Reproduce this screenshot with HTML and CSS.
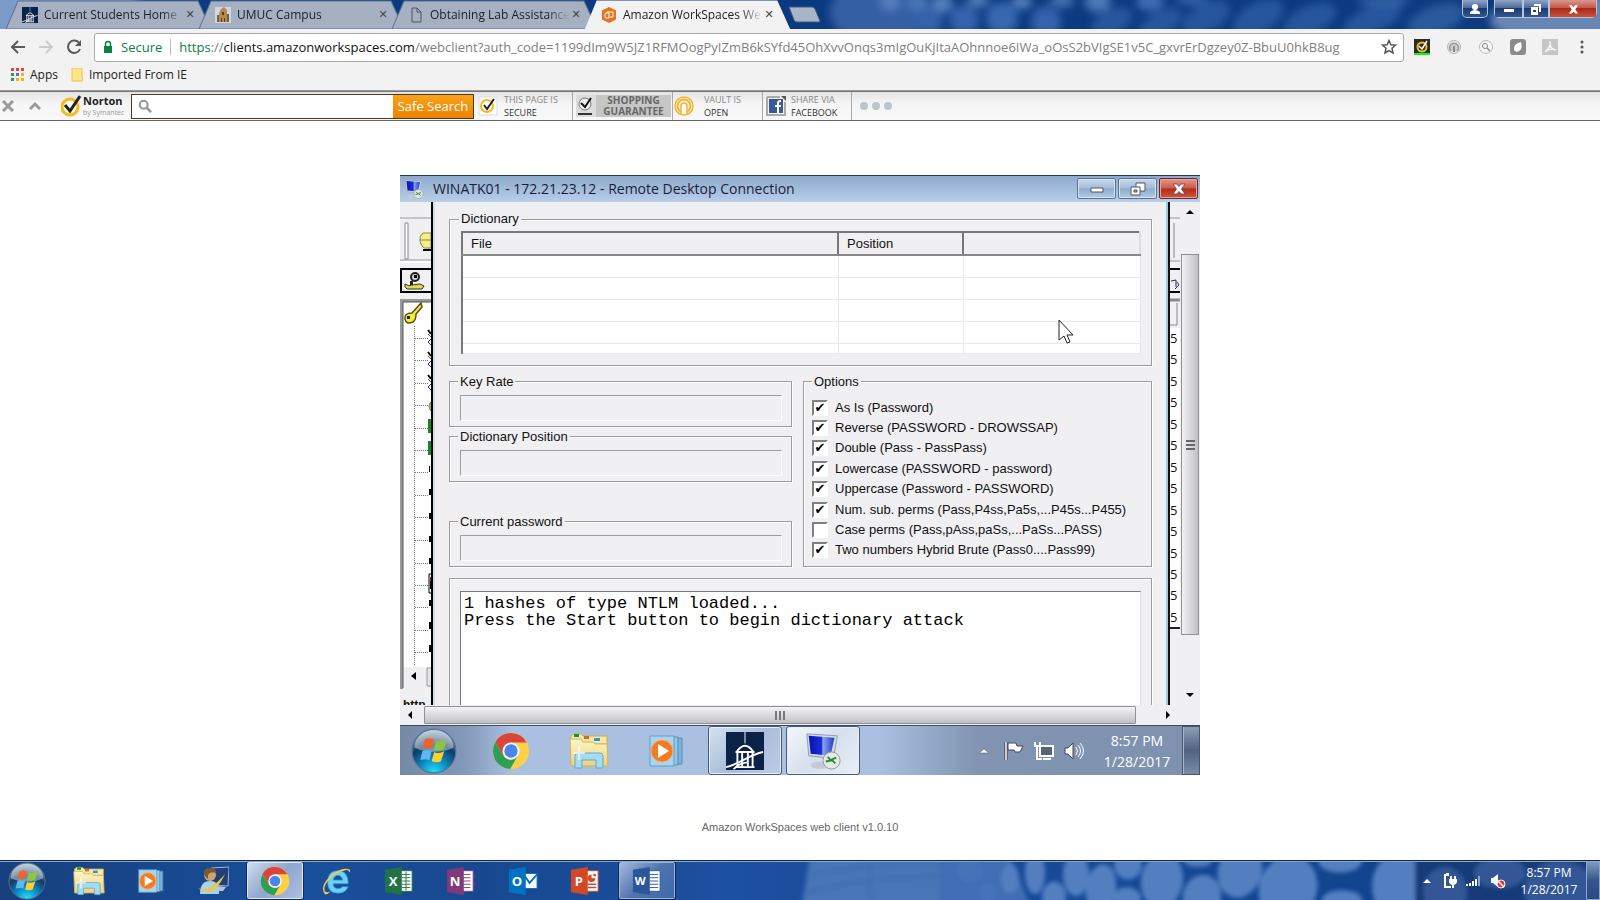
FILE: index.html
```html
<!DOCTYPE html>
<html lang="en">
<head>
<meta charset="utf-8">
<title>Amazon WorkSpaces Web Client</title>
<link rel="stylesheet" href="styles.css">
</head>
<body>
<svg class="defs" aria-hidden="true">
  <defs>
    <radialGradient id="orbG" cx=".5" cy="1" r="1"><stop offset="0" stop-color="#25e4ff"/><stop offset=".35" stop-color="#0a86bd"/><stop offset=".65" stop-color="#12395f"/><stop offset="1" stop-color="#a9c0d4"/></radialGradient>
    <linearGradient id="foldG" x2="0" y2="1"><stop offset="0" stop-color="#fdf6c8"/><stop offset="1" stop-color="#ecd27a"/></linearGradient>
    <linearGradient id="scrG" x2="1" y2="0"><stop offset="0" stop-color="#0a12b0"/><stop offset=".5" stop-color="#1830d8"/><stop offset=".55" stop-color="#8fa4f0"/><stop offset="1" stop-color="#2038c0"/></linearGradient>
    <filter id="soft"><feGaussianBlur stdDeviation="2"/></filter>
    <filter id="softer"><feGaussianBlur stdDeviation="4"/></filter>
  </defs>
  <symbol id="orb" viewBox="0 0 40 40">
    <circle cx="20" cy="20" r="19" fill="url(#orbG)" stroke="#54718f"/>
    <path d="M3 17a17 15 0 0 1 34 0c-10 5-24 5-34 0z" fill="#fff" opacity=".4"/>
    <path d="M12 10c3-2 6-1 8 0l-2 8c-3-1-5-1-8 0z" fill="#f0612c"/>
    <path d="M22 11c3 1 6 1 9-1l-2 8c-3 2-6 2-9 1z" fill="#8cc63e"/>
    <path d="M10 20c3-1 5-1 8 0l-2 8c-2-1-5-1-8 0z" fill="#5fb7ee"/>
    <path d="M20 21c3 1 6 1 9-1l-3 9c-2 1-5 1-8 0z" fill="#fcd02e"/>
  </symbol>
  <symbol id="folder" viewBox="0 0 40 36">
    <path d="M2 3l2-2h8l2 2h24v8H2z" fill="#f7e9a5" stroke="#c9a95a"/>
    <path d="M5 1h5v3H5z" fill="#0a9a3c"/><path d="M15 3h5v3h-5z" fill="#e0642a"/><path d="M25 5h6v3h-6z" fill="#3a8edc"/>
    <path d="M1 6h11l2 3h10l2 2h12l1 22H2z" fill="url(#foldG)" stroke="#d2b25c"/>
    <path d="M6 35V23q0-3 3-3h22q3 0 3 3v12h-7v-8H13v8z" fill="#a6dcf0" stroke="#5fa9cf"/>
    <path d="M10 13v14M4 20h12" stroke="#fff" stroke-width="2" opacity=".7"/>
  </symbol>
  <symbol id="wmp" viewBox="0 0 36 32">
    <path d="M20 3h13v26H20z" fill="#7fb4d8" stroke="#4f8fb9"/><path d="M16 2h13v28H16z" fill="#95c6e4" stroke="#4f8fb9"/>
    <path d="M1 1h24v30H1z" fill="#a9d5ee" stroke="#5c9fca"/><circle cx="13" cy="16" r="11" fill="#f47b20" stroke="#fbb070"/><path d="M9 9l11 7-11 7z" fill="#fff"/>
  </symbol>
  <symbol id="chrome" viewBox="0 0 40 40">
    <circle cx="20" cy="20" r="19" fill="#fdd04a"/>
    <path d="M20 11h16.500A19 19 0 0 0 3.500 10.500L12 25z" fill="#d8453a"/>
    <path d="M3.500 10.500A19 19 0 0 0 19 39l8.500-14.500A9 9 0 0 1 12 25z" fill="#2f9e56"/>
    <circle cx="20" cy="20" r="9" fill="#f4f6f8"/><circle cx="20" cy="20" r="7" fill="#4a86ea"/>
  </symbol>
  <symbol id="gazebo" viewBox="0 0 40 40">
    <path d="M0 0h40v40H0z" fill="#0b2248"/><path d="M20 0v12" stroke="#fff"/><path d="M11 21q9-13 18 0M10 21h20M12 21v16M28 21v16M17 22v15M23 22v15M10 37h20" fill="none" stroke="#fff" stroke-width="2"/>
    <path d="M0 37C14 34 24 24 39 21M8 39q6-6 14-7" fill="none" stroke="#fff" stroke-width="2"/>
  </symbol>
  <symbol id="remote" viewBox="0 0 40 40">
    <path d="M3 2l32 2-4 24-26-3z" fill="#d4dbe6" stroke="#8e9ab0"/><path d="M5 4l27 2-4 19-21-2z" fill="url(#scrG)"/>
    <ellipse cx="17" cy="35" rx="10" ry="4" fill="#c3cad6"/><circle cx="29" cy="30" r="9" fill="#e3e8e6" stroke="#8f9a96"/>
    <path d="M23 31l5-1-3-4M34 27l-5 2 4 4" fill="none" stroke="#2c8a34" stroke-width="2"/>
  </symbol>
</svg>

<header class="tabstrip">
  <svg class="wall" viewBox="0 0 1600 29" preserveAspectRatio="none" aria-hidden="true">
    <g filter="url(#softer)">
      <ellipse cx="20" cy="8" rx="120" ry="40" fill="#7c9bcb"/>
      <ellipse cx="880" cy="12" rx="50" ry="34" fill="#355fa5"/>
      <ellipse cx="890" cy="2" rx="10" ry="8" fill="#5580bf"/><ellipse cx="918" cy="3" rx="11" ry="8" fill="#4a76b9"/><ellipse cx="942" cy="4" rx="11" ry="9" fill="#5580c0"/>
      <ellipse cx="930" cy="22" rx="13" ry="12" fill="#3462aa"/><ellipse cx="964" cy="20" rx="15" ry="15" fill="#3462aa"/><ellipse cx="978" cy="1" rx="11" ry="6" fill="#5580c0"/>
      <ellipse cx="1002" cy="18" rx="16" ry="16" fill="#3968b0"/><ellipse cx="1022" cy="2" rx="10" ry="7" fill="#5480c0"/><ellipse cx="1046" cy="22" rx="15" ry="16" fill="#3462aa"/>
      <ellipse cx="1062" cy="1" rx="12" ry="6" fill="#4a76b8"/><ellipse cx="1098" cy="2" rx="13" ry="10" fill="#4d79bb"/><ellipse cx="1112" cy="22" rx="22" ry="12" fill="#28569d" transform="rotate(-25 1112 22)"/>
      <ellipse cx="1150" cy="2" rx="14" ry="9" fill="#3e6db2"/><ellipse cx="1160" cy="24" rx="24" ry="12" fill="#28569d" transform="rotate(-30 1160 24)"/>
      <ellipse cx="1206" cy="18" rx="26" ry="14" fill="#28569d" transform="rotate(-30 1206 18)"/><ellipse cx="1192" cy="0" rx="16" ry="4" fill="#3e6db2"/>
      <ellipse cx="1258" cy="18" rx="28" ry="15" fill="#28569d" transform="rotate(-30 1258 18)"/><ellipse cx="1310" cy="20" rx="28" ry="14" fill="#28569d" transform="rotate(-25 1310 20)"/>
      <ellipse cx="1372" cy="20" rx="32" ry="13" fill="#28569d" transform="rotate(-25 1372 20)"/><ellipse cx="1384" cy="1" rx="26" ry="5" fill="#3562a6"/>
      <ellipse cx="1436" cy="20" rx="30" ry="14" fill="#2b5a9c" transform="rotate(-20 1436 20)"/><ellipse cx="1580" cy="20" rx="90" ry="26" fill="#6886b4"/>
    </g>
  </svg>
  <nav class="tabs" aria-label="Tabs">
    <div class="tab">
      <svg class="tab-bg" viewBox="0 0 205 28" preserveAspectRatio="none"><path d="M0 28L12 1h180l13 27z"/></svg>
      <svg class="fav"><use href="#gazebo"/></svg><a href="#" class="tab-title">Current Students Home |</a><button class="x" aria-label="Close tab"></button>
    </div>
    <div class="tab">
      <svg class="tab-bg" viewBox="0 0 205 28" preserveAspectRatio="none"><path d="M0 28L12 1h180l13 27z"/></svg>
      <svg class="fav" viewBox="0 0 16 16"><path d="M0 0h16v16H0z" fill="#cfd8e2"/><path d="M4 15V6l2-4 3-2 3 3v12z" fill="#b58a4c"/><path d="M2 15V8h2v7zM12 15V7h2v8z" fill="#7a6238"/><path d="M6 15v-4h1v4zM9 15v-4h1v4zM7 5h2v3H7z" fill="#5a3a1e"/></svg>
      <a href="#" class="tab-title">UMUC Campus</a><button class="x" aria-label="Close tab"></button>
    </div>
    <div class="tab">
      <svg class="tab-bg" viewBox="0 0 205 28" preserveAspectRatio="none"><path d="M0 28L12 1h180l13 27z"/></svg>
      <svg class="fav" viewBox="0 0 16 16"><path d="M4 1h5l4 4v10H4zM9 1v4h4" fill="none" stroke="#4d5662"/></svg>
      <a href="#" class="tab-title">Obtaining Lab Assistance</a><button class="x" aria-label="Close tab"></button>
    </div>
    <div class="tab active">
      <svg class="tab-bg" viewBox="0 0 205 28" preserveAspectRatio="none"><path d="M0 29L12 1h180l13 28z"/></svg>
      <svg class="fav" viewBox="0 0 16 16"><path d="M8 0l7 3.500v9L8 16l-7-3.500v-9z" fill="#e8711c"/><path d="M4 7q0-1 1-1h3v5H5q-1 0-1-1zM6 6V5h6v5H9" fill="none" stroke="#fff"/></svg>
      <a href="#" class="tab-title">Amazon WorkSpaces We</a><button class="x" aria-label="Close tab"></button>
    </div>
    <button class="newtab" aria-label="New tab"><svg viewBox="0 0 34 18"><path d="M1 1h23q2 0 3 2l5 12q0 1-1 1H9q-2 0-3-2z" fill="#a9b4c5" stroke="#3d5d90"/></svg></button>
  </nav>
  <div class="wincontrols">
    <button class="glass profile" aria-label="Profile"><svg viewBox="0 0 12 12"><circle cx="6" cy="4" r="3"/><path d="M1 11V9q5-4 10 0v2z"/></svg></button>
    <div class="trio">
      <button class="glass" aria-label="Minimize"><svg viewBox="0 0 12 12"><path d="M1 6h10v3H1z"/></svg></button>
      <button class="glass" aria-label="Restore"><svg viewBox="0 0 12 12"><path d="M4 1h7v8H9V3H4zM1 4h7v8H1zM3 7v2h3V7z" fill-rule="evenodd"/></svg></button>
      <button class="glass close" aria-label="Close"><svg viewBox="0 0 12 12"><path d="M1 2h3l2 2 2-2h3L8 6.500 11 11H8L6 9l-2 2H1l3-4.500z"/></svg></button>
    </div>
  </div>
</header>

<div class="toolbar">
  <button aria-label="Back"><svg viewBox="0 0 16 16"><path d="M15 8H2M8 2L2 8l6 6" class="ln"/></svg></button>
  <button aria-label="Forward" class="off"><svg viewBox="0 0 16 16"><path d="M1 8h13M8 2l6 6-6 6" class="ln"/></svg></button>
  <button aria-label="Reload"><svg viewBox="0 0 16 16"><path d="M13.500 4.500A6.200 6.200 0 1 0 14 10" class="ln"/><path d="M15 1v6H9z" fill="#5a5a5a"/></svg></button>
  <div class="omnibox">
    <svg class="lock" viewBox="0 0 10 14"><path d="M1 6h8v7H1z" fill="#0b8043"/><path d="M2.500 6V4a2.500 2.500 0 0 1 5 0v2" fill="none" stroke="#0b8043" stroke-width="1.500"/></svg>
    <span class="secure">Secure</span>
    <div class="url" role="textbox" aria-label="Address" contenteditable="true" spellcheck="false"><span class="https">https</span>://<span class="host">clients.amazonworkspaces.com</span>/webclient?auth_code=1199dIm9W5JZ1RFMOogPyIZmB6kSYfd45OhXvvOnqs3mIgOuKjItaAOhnnoe6IWa_oOsS2bVIgSE1v5C_gxvrErDgzey0Z-BbuU0hkB8ug</div>
    <button aria-label="Bookmark"><svg viewBox="0 0 16 16"><path d="M8 1.500l1.900 4.300 4.600.4-3.500 3.100 1 4.600L8 11.500l-4 2.400 1-4.600L1.500 6.200l4.600-.4z" fill="none" stroke="#555" stroke-width="1.500"/></svg></button>
  </div>
  <div class="exts">
    <button aria-label="Norton Security"><svg viewBox="0 0 16 16"><path d="M0 0h16v16H0z" fill="#2a2a2a"/><path d="M0 14h16v2H0z" fill="#0f0"/><circle cx="8" cy="8" r="4.500" fill="none" stroke="#fbb81c" stroke-width="2"/><path d="M5 7l3 3 5-8" fill="none" stroke="#fff" stroke-width="1.500"/></svg></button>
    <button aria-label="Norton Identity Safe"><svg viewBox="0 0 16 16"><circle cx="8" cy="8" r="6.500" fill="#e8e8e8" stroke="#b5b5b5"/><path d="M5 12a4.500 4.500 0 1 1 6 0" fill="#ccc" stroke="#9a9a9a" stroke-width="1.500"/><path d="M7 13V8a1 1 0 0 1 2 0v5z" fill="#888"/></svg></button>
    <button aria-label="Safe Search"><svg viewBox="0 0 16 16"><circle cx="8" cy="8" r="6.500" fill="#f6f6f6" stroke="#bbb"/><circle cx="7" cy="7" r="2.500" fill="none" stroke="#888"/><path d="M9 9l3 3" stroke="#888" stroke-width="1.500"/></svg></button>
    <button aria-label="Shield"><svg viewBox="0 0 16 16"><rect width="16" height="16" rx="3" fill="#8b8b8b"/><path d="M11 3q2 7-2 9-3 2-5-1Q3 5 11 3z" fill="#fff"/></svg></button>
    <button aria-label="Acrobat"><svg viewBox="0 0 16 16"><path d="M0 0h16v16H0z" fill="#c6c6c6"/><path d="M7 3q2-1 1 3-1 4-5 7M8 6q1 4 6 5-5-2-10 1" fill="none" stroke="#fff" stroke-width="1.200"/></svg></button>
    <button aria-label="Menu"><svg viewBox="0 0 16 16"><g fill="#555"><circle cx="8" cy="3" r="1.500"/><circle cx="8" cy="8" r="1.500"/><circle cx="8" cy="13" r="1.500"/></g></svg></button>
  </div>
</div>

<nav class="bookmarks" aria-label="Bookmarks">
  <a href="#"><svg viewBox="0 0 14 14"><path d="M0 0h3v3H0zM5 0h3v3H5zM10 0h3v3h-3z" fill="#e9403a"/><path d="M0 5h3v3H0zM0 10h3v3H0z" fill="#2f9e56"/><path d="M5 5h3v3H5z" fill="#3b78e7"/><path d="M10 5h3v3h-3zM10 10h3v3h-3zM5 10h3v3H5z" fill="#f4b400"/></svg>Apps</a>
  <a href="#"><svg viewBox="0 0 14 14"><path d="M2 0h10v9l1 2-1 2H2z" fill="#fde588" stroke="#e6c24d"/></svg>Imported From IE</a>
</nav>

<section class="norton" aria-label="Norton Toolbar">
  <button class="nx" aria-label="Close toolbar"><svg viewBox="0 0 12 12"><path d="M1 1l10 10M11 1L1 11" stroke="#999" stroke-width="3"/></svg></button>
  <button class="nx" aria-label="Collapse toolbar"><svg viewBox="0 0 12 12"><path d="M1 9l5-5 5 5" fill="none" stroke="#999" stroke-width="3"/></svg></button>
  <a href="#" class="nlogo"><svg viewBox="0 0 20 22"><circle cx="9" cy="12" r="8" fill="#fff" stroke="#fbb81c" stroke-width="3"/><path d="M4 10l5 6L19 1" fill="none" stroke="#222" stroke-width="3"/></svg><span><b>Norton</b><small>by Symantec</small></span></a>
  <form class="nsearch"><svg viewBox="0 0 16 16"><circle cx="6.500" cy="6.500" r="4.500" fill="none" stroke="#999" stroke-width="2.500"/><path d="M10 10l5 5" stroke="#999" stroke-width="3"/></svg><input type="text" aria-label="Search"><button type="button">Safe Search</button></form>
  <a href="#" class="nitem page"><svg viewBox="0 0 20 20"><path d="M1 1h18v18H1z" fill="#fff" stroke="#ddd"/><circle cx="9" cy="10" r="6" fill="none" stroke="#fbb81c" stroke-width="2"/><path d="M6 9l3 4 7-10" fill="none" stroke="#222" stroke-width="2"/></svg><span>THIS PAGE IS<em>SECURE</em></span></a>
  <a href="#" class="nitem guarantee"><svg viewBox="0 0 20 22"><circle cx="9" cy="9" r="6" fill="#eee" stroke="#777"/><path d="M5 8l4 4 6-9" fill="none" stroke="#111" stroke-width="2"/><path d="M2 18h14v2H2z" fill="#333"/></svg><span><b>SHOPPING</b><b>GUARANTEE</b></span></a>
  <a href="#" class="nitem vault"><svg viewBox="0 0 20 20"><circle cx="10" cy="10" r="9" fill="none" stroke="#f7b52a" stroke-width="1.500"/><circle cx="10" cy="10" r="6.500" fill="none" stroke="#f7b52a" stroke-width="2"/><path d="M7 18v-8a3 3 0 0 1 6 0v8" fill="#fff" stroke="#f7b52a" stroke-width="1.500"/></svg><span>VAULT IS<em>OPEN</em></span></a>
  <a href="#" class="nitem share"><svg viewBox="0 0 20 20"><path d="M1 1h13M1 1v18h18V6" fill="none" stroke="#aaa" stroke-width="2"/><path d="M3 3h14v14H3z" fill="#3b5998"/><path d="M15 0h5v5" fill="#555"/><path d="M11 17v-6H9V9h2V7q0-3 4-3v2q-2 0-2 1v2h2v2h-2v6z" fill="#fff"/></svg><span>SHARE VIA<em>FACEBOOK</em></span></a>
  <button class="more" aria-label="More"><i></i><i></i><i></i></button>
</section>

<main>
  <section class="rdp" aria-label="Remote desktop">
    <div class="rdp-title">
      <svg viewBox="0 0 40 40"><use href="#remote"/></svg><h1>WINATK01 - 172.21.23.12 - Remote Desktop Connection</h1>
      <button aria-label="Minimize"><svg viewBox="0 0 16 14"><path d="M2 6h12v4H2z" fill="#fff" stroke="#556"/></svg></button>
      <button aria-label="Restore"><svg viewBox="0 0 16 14"><path d="M6 1h9v8H6z" fill="#fff" stroke="#556"/><path d="M1 5h9v8H1z" fill="#fff" stroke="#556"/><path d="M4 8h3v2H4z" fill="#aac" stroke="#556"/></svg></button>
      <button class="close" aria-label="Close"><svg viewBox="0 0 16 14"><path d="M2 2h4l2 2.500L10 2h4l-3.500 5L14 12h-4L8 9.500 6 12H2l3.500-5z" fill="#fff" stroke="#734" stroke-width=".8"/></svg></button>
    </div>
    <div class="rdp-view">
      <div class="back-left">
        <svg viewBox="0 0 31 503" preserveAspectRatio="xMinYMin slice" aria-hidden="true">
          <path d="M0 0h31v503H0z" fill="#f0eff1"/><path d="M0 16h31M0 58h31" stroke="#999"/><path d="M0 60h31" stroke="#fff" stroke-width="2"/>
          <path d="M5 21v36h3V21z" fill="#fff" stroke="#888"/><path d="M31 31h-8q-4 3-3 8t4 7h7z" fill="#f3ee8a" stroke="#8a8640"/><path d="M20 38h11" stroke="#8a8640"/><path d="M23 47h8v2h-8z"/>
          <path d="M32 67H1v23h31" fill="none" stroke="#000" stroke-width="2"/>
          <circle cx="15" cy="75" r="4" fill="#ccc" stroke="#222" stroke-width="2"/><path d="M14 73h3v3h-3z"/><path d="M10 79h3v4h-3z" fill="#222"/><path d="M5 82q4 3 7 1l8-1 4 2-2 3H7q-3-2-2-5z" fill="#e3d94a" stroke="#333"/>
          <path d="M0 97h31v389H0z" fill="#fff"/><path d="M0 97h3v390H0zM0 97h31v3H0z" fill="#999"/><path d="M3 486V100h28" fill="none" stroke="#555"/>
          <path d="M21 101l-9 10q-8 0-7 6t8 3q3-2 3-8l6-7z" fill="#f5ea3a" stroke="#554c10" stroke-width="1.500"/><path d="M7 114h3v3H7z" fill="#222"/>
          <path d="M14.500 124v340M15 136.500h14M15 158.500h14M15 181.500h14M15 203.500h14M15 226.500h14M15 248.500h14M15 270.500h14M15 293.500h14M15 315.500h14M15 338.500h14M15 361.500h14M15 383.500h14M15 405.500h14M15 428.500h14M15 450.500h14" stroke="#777" stroke-dasharray="1 1"/>
          <path d="M4 465h28v21H4zM0 488h31v15H0z" fill="#f0eff1"/>
          <g fill="none"><path d="M28 128l3 4M28 150l3 4M28 173l3 4" stroke="#111" stroke-width="2"/><path d="M28 132l3 3M28 154l3 3M28 177l3 3" stroke="#c22"/><path d="M31 137l-3 3 3 3M31 159l-3 3 3 3M31 182l-3 3 3 3" stroke="#22a"/></g>
          <path d="M31 200q-4 4 0 9z" fill="#e8d820" stroke="#776"/><path d="M28 217h3v14h-3zM28 239h3v14h-3z" fill="#128a20"/>
          <path d="M29 264h1v6h-1zM29 287h2v6h-2zM29 311h2v6h-2zM29 334h2v6h-2zM29 356h2v6h-2zM29 398h2v6h-2zM29 420h2v7h-2zM29 443h2v7h-2z"/><path d="M32 372h-3v19h3" fill="none" stroke="#000"/><path d="M30 375h2v4h-2z" fill="#b22"/><path d="M30 379h2v8h-2z"/>
          <path d="M16 470v8l-5-4z"/><path d="M27 466h6v18h-6z" fill="#e4e4e6" stroke="#999"/>
        </svg>
        <span class="status">http</span>
      </div>
      <div class="dialog">
        <fieldset class="dict">
          <legend>Dictionary</legend>
          <table>
            <colgroup><col class="c1"><col class="c2"><col></colgroup>
            <thead><tr><th>File</th><th>Position</th><th></th></tr></thead>
            <tbody><tr><td></td><td></td><td></td></tr><tr><td></td><td></td><td></td></tr><tr><td></td><td></td><td></td></tr><tr><td></td><td></td><td></td></tr><tr class="part"><td></td><td></td><td></td></tr></tbody>
          </table>
        </fieldset>
        <div class="cols">
          <div class="stack">
            <fieldset><legend>Key Rate</legend><input type="text" aria-label="Key Rate" readonly></fieldset>
            <fieldset><legend>Dictionary Position</legend><input type="text" aria-label="Dictionary Position" readonly></fieldset>
            <fieldset class="current"><legend>Current password</legend><input type="text" aria-label="Current password" readonly></fieldset>
          </div>
          <fieldset class="options">
            <legend>Options</legend>
            <div class="checks">
              <label><input type="checkbox" checked>As Is (Password)</label>
              <label><input type="checkbox" checked>Reverse (PASSWORD - DROWSSAP)</label>
              <label><input type="checkbox" checked>Double (Pass - PassPass)</label>
              <label><input type="checkbox" checked>Lowercase (PASSWORD - password)</label>
              <label><input type="checkbox" checked>Uppercase (Password - PASSWORD)</label>
              <label><input type="checkbox" checked>Num. sub. perms (Pass,P4ss,Pa5s,...P45s...P455)</label>
              <label><input type="checkbox">Case perms (Pass,pAss,paSs,...PaSs...PASS)</label>
              <label><input type="checkbox" checked>Two numbers Hybrid Brute (Pass0....Pass99)</label>
            </div>
          </fieldset>
        </div>
        <div class="log">
          <textarea aria-label="Attack log" readonly>1 hashes of type NTLM loaded...
Press the Start button to begin dictionary attack</textarea>
        </div>
        <svg class="cursor" viewBox="0 0 16 25"><path d="M1 1v20l5-4 3 7 3-1-3-7h6z" fill="#fff" stroke="#222"/></svg>
      </div>
      <div class="back-right">
        <svg viewBox="0 0 10 126" aria-hidden="true"><path d="M0 0h10v126H0z" fill="#f0eff1"/><path d="M0 16h10M0 59h10" stroke="#999"/><path d="M4 21v35" stroke="#888"/><path d="M0 67h10M0 90h10" stroke="#000" stroke-width="2"/><path d="M1 79l5-1v7M7 80l2 3-4 4" fill="none" stroke="#326"/><path d="M0 98h10" stroke="#888" stroke-width="3"/><path d="M0 123h7v-22" fill="none" stroke="#888"/></svg>
        <div class="fives"><span>5</span><span>5</span><span>5</span><span>5</span><span>5</span><span>5</span><span>5</span><span>5</span><span>5</span><span>5</span><span>5</span><span>5</span><span>5</span><span>5</span></div>
        <div class="below"></div>
      </div>
      <div class="vscroll"><button aria-label="Scroll up"><svg viewBox="0 0 10 6"><path d="M1 5l4-4 4 4z"/></svg></button><div class="vthumb"><i></i><i></i><i></i></div><button aria-label="Scroll down"><svg viewBox="0 0 10 6"><path d="M1 1l4 4 4-4z"/></svg></button></div>
    </div>
    <div class="hscroll"><button aria-label="Scroll left"><svg viewBox="0 0 6 10"><path d="M5 1L1 5l4 4z"/></svg></button><div class="hthumb"><i></i><i></i><i></i></div><button aria-label="Scroll right"><svg viewBox="0 0 6 10"><path d="M1 1l4 4-4 4z"/></svg></button><span class="corner"></span></div>
    <div class="rbar">
      <button class="start" aria-label="Start"><svg><use href="#orb"/></svg></button>
      <button aria-label="Chrome"><svg><use href="#chrome"/></svg></button>
      <button aria-label="Explorer"><svg><use href="#folder"/></svg></button>
      <button aria-label="Media Player" class="wmp"><svg><use href="#wmp"/></svg></button>
      <button aria-label="UMUC" class="on"><svg><use href="#gazebo"/></svg></button>
      <button aria-label="Remote Desktop" class="on lit"><svg><use href="#remote"/></svg></button>
      <div class="rtray">
        <svg class="up" viewBox="0 0 10 6"><path d="M0 5l5-4 5 4z" fill="#fff" stroke="#456" stroke-width=".5"/></svg>
        <svg viewBox="0 0 20 20"><path d="M2 1v18" stroke="#334" stroke-width="3"/><path d="M2 1v18" stroke="#fff" stroke-width="1.500"/><path d="M4 2h8l1 3h6l-3 6h-5l-1-2H4z" fill="#fff" stroke="#445"/></svg>
        <svg viewBox="0 0 20 20"><path d="M6 5h13v10H6z" fill="#567" stroke="#fff" stroke-width="2"/><path d="M1 1v4h5V1M3 5v13h5M9 18h8" fill="none" stroke="#fff" stroke-width="2"/></svg>
        <svg viewBox="0 0 20 20"><path d="M1 7h3l5-5v16l-5-5H1z" fill="#fff" stroke="#445"/><path d="M12 6q3 4 0 8M14 4q5 6 0 12M16 2q7 8 0 16" fill="none" stroke="#fff"/></svg>
        <time>8:57 PM<br>1/28/2017</time>
      </div>
      <button class="peek" aria-label="Show desktop"></button>
    </div>
  </section>
  <p class="version">Amazon WorkSpaces web client v1.0.10</p>
</main>

<footer class="taskbar">
  <svg class="wall" viewBox="0 0 1600 40" preserveAspectRatio="none" aria-hidden="true">
    <g filter="url(#soft)">
      <path d="M810-5h150v50H802z" fill="#4674b5"/><path d="M940-5h70l20 50h-90z" fill="#3f6db4"/>
      <path d="M810 14q60-12 140-12M806 32q70-18 150-16M870 0v40" fill="none" stroke="#3f6cb0" stroke-width="2"/>
      <g fill="#537fc1"><ellipse cx="970" cy="10" rx="14" ry="12" fill="#4473b8"/><ellipse cx="988" cy="32" rx="10" ry="10" fill="#4473b8"/><ellipse cx="1010" cy="18" rx="9" ry="15"/><ellipse cx="1035" cy="12" rx="10" ry="22"/><ellipse cx="1054" cy="36" rx="12" ry="15"/><ellipse cx="1076" cy="14" rx="13" ry="22"/><ellipse cx="1101" cy="28" rx="15" ry="25" transform="rotate(8 1101 28)"/><ellipse cx="1128" cy="4" rx="14" ry="15"/><ellipse cx="1127" cy="38" rx="14" ry="11"/><ellipse cx="1162" cy="20" rx="21" ry="28" transform="rotate(8 1162 20)"/><ellipse cx="1198" cy="0" rx="14" ry="6"/><ellipse cx="1202" cy="36" rx="19" ry="22" transform="rotate(12 1202 36)"/><ellipse cx="1240" cy="10" rx="22" ry="28" transform="rotate(15 1240 10)"/><ellipse cx="1288" cy="28" rx="29" ry="34" transform="rotate(18 1288 28)"/><ellipse cx="1340" cy="0" rx="22" ry="12"/><ellipse cx="1342" cy="40" rx="20" ry="10"/><ellipse cx="1398" cy="26" rx="26" ry="34"/></g>
      <path d="M1415-5h190v50h-190z" fill="#143a78"/><g fill="#305796"><ellipse cx="1445" cy="32" rx="22" ry="26"/><ellipse cx="1500" cy="12" rx="26" ry="16"/><ellipse cx="1560" cy="30" rx="36" ry="30"/></g>
    </g>
  </svg>
  <div class="apps">
    <button class="start" aria-label="Start"><svg><use href="#orb"/></svg></button>
    <button aria-label="Explorer"><svg><use href="#folder"/></svg></button>
    <button aria-label="Media Player"><svg class="sm"><use href="#wmp"/></svg></button>
    <button aria-label="Logon Screen"><svg viewBox="0 0 32 30"><path d="M14 2l18-1-1 19-17-1z" fill="#1d3f7e" stroke="#a9b6c8"/><path d="M20 20l9 1-3 4h-6z" fill="#b9c3d0"/><circle cx="13" cy="9" r="6" fill="#d2a26c"/><path d="M7 9q-1-7 6-7t6 5q-6-2-8 2v4z" fill="#7a5a30"/><path d="M3 28q0-13 10-13t9 13z" fill="#a6d4ea"/><path d="M1 22q10 6 27-14Q16 34 1 22z" fill="#f3c53a"/></svg></button>
    <button class="on lit" aria-label="Chrome"><svg><use href="#chrome"/></svg></button>
    <button aria-label="Internet Explorer"><svg viewBox="0 0 32 32"><path d="M28 19H12q0 5 5 5 3 0 5-2h6q-3 7-11 7Q6 29 6 17T17 5q11 0 11 14zM12 15h10q-1-5-5-5t-5 5z" fill="#6fd0f5" stroke="#2a93d4" stroke-width=".8"/><path d="M3 30Q-3 22 9 11T30 4q0 2-1 3 0-4-6-2-8 2-15 9T3 27q2 2 6 0-3 4-6 3z" fill="#f9ce38"/></svg></button>
    <button aria-label="Excel"><svg class="of" viewBox="0 0 32 32"><path d="M17 5h13v22H17z" fill="#fff" stroke="#217346"/><path d="M19 9h9M19 12.500h9M19 16h9M19 19.500h9M19 23h9M23.500 6v20" stroke="#217346"/><path d="M1 4l18-3v30L1 28z" fill="#217346"/><text x="5" y="21" class="ol">X</text></svg></button>
    <button aria-label="OneNote"><svg class="of" viewBox="0 0 32 32"><path d="M17 5h12v22H17z" fill="#fff" stroke="#80397b"/><path d="M19 9h7M19 12.500h7M19 16h7M19 19.500h7M19 23h7M29 10h2v3M29 18h2v3" stroke="#80397b" fill="none"/><path d="M1 4l18-3v30L1 28z" fill="#80397b"/><text x="4" y="21" class="ol">N</text></svg></button>
    <button aria-label="Outlook"><svg class="of" viewBox="0 0 32 32"><path d="M17 8h14v16H17z" fill="#fff" stroke="#0072c6"/><path d="M18 11l5 7 8-9" fill="none" stroke="#0072c6" stroke-width="2"/><path d="M1 4l18-3v30L1 28z" fill="#0072c6"/><text x="4" y="21" class="ol">O</text></svg></button>
    <button aria-label="PowerPoint"><svg class="of" viewBox="0 0 32 32"><path d="M17 5h13v22H17z" fill="#fff" stroke="#d24726"/><circle cx="23" cy="13" r="4" fill="#d24726"/><path d="M23 13V8h5v5z" fill="#fff"/><path d="M25 11V8q3 0 3 3z" fill="#d24726"/><path d="M19 19.500h9M19 23h9" stroke="#d24726" stroke-width="1.500"/><path d="M1 4l18-3v30L1 28z" fill="#d24726"/><text x="5" y="21" class="ol">P</text></svg></button>
    <button class="on" aria-label="Word"><svg class="of" viewBox="0 0 32 32"><path d="M17 5h13v22H17z" fill="#fff" stroke="#2b579a"/><path d="M19 9h9M19 12.500h9M19 16h9M19 19.500h9M19 23h9" stroke="#2b579a"/><path d="M1 4l18-3v30L1 28z" fill="#2b579a"/><text x="3" y="20" class="ol w">W</text></svg></button>
  </div>
  <div class="tray">
    <svg class="up" viewBox="0 0 10 6"><path d="M1 5l4-4 4 4z" fill="#fff"/></svg>
    <svg viewBox="0 0 16 16"><path d="M7 2H3v12h6M4 1h3" fill="none" stroke="#fff" stroke-width="2"/><path d="M7 6h8v3q-1 3-4 3t-4-3zM8 3h2v3H8zM12 3h2v3h-2zM10 12h2v3h-2z" fill="#fff"/></svg>
    <svg viewBox="0 0 16 16"><path d="M0 11h2v2H0zM3 10h2v3H3zM6 8h2v5H6zM9 6h2v7H9z" fill="#fff"/><path d="M12 3h2v10h-2z" fill="#8fa5c8"/></svg>
    <svg viewBox="0 0 16 16"><path d="M1 5h2l5-4v13l-5-4H1z" fill="#fff"/><circle cx="11" cy="11" r="4" fill="#e33" stroke="#fff"/><path d="M8 8l6 6" stroke="#fff" stroke-width="1.500"/></svg>
    <time>8:57 PM<br>1/28/2017</time>
  </div>
  <button class="peek" aria-label="Show desktop"></button>
</footer>
</body>
</html>
```
FILE: styles.css
```css
* { box-sizing: border-box; }
body {
  margin: 0;
  min-height: 100vh;
  display: flex;
  flex-direction: column;
  background: #fff;
  font-family: "Open Sans", "Noto Sans", sans-serif;
  font-size: 12px;
  color: #222;
  overflow-x: hidden;
}
button, input, textarea { font: inherit; color: inherit; margin: 0; padding: 0; border: 0; background: none; border-radius: 0; }
button { display: flex; align-items: center; justify-content: center; flex: none; }
a { color: inherit; text-decoration: none; }
svg { flex: none; display: block; }
.defs { position: absolute; width: 0; height: 0; }
.wall { position: absolute; inset: 0; width: 100%; height: 100%; }

/* Tab strip */
.tabstrip { position: relative; display: flex; justify-content: space-between; height: 29px; background: #0c3a80; overflow: hidden; }
.tabs { position: relative; display: flex; padding-left: 6px; }
.tab { position: relative; display: flex; align-items: center; width: 205px; height: 29px; margin-right: -12px; padding: 0 14px 0 16px; }
.tab-bg { position: absolute; inset: 0; width: 100%; height: 100%; }
.tab-bg path { fill: #a5b1c3; stroke: #5d718f; }
.active .tab-bg path { fill: #f2f2f2; stroke: #f2f2f2; }
.fav { position: relative; width: 16px; height: 16px; margin-right: 6px; }
.tab-title { position: relative; flex: 1; min-width: 0; white-space: nowrap; -webkit-mask-image: linear-gradient(90deg, #000 85%, transparent); mask-image: linear-gradient(90deg, #000 85%, transparent); }
.x { position: relative; width: 14px; height: 16px; }
.x::before { content: "✕"; font-family: "DejaVu Sans", sans-serif; font-size: 11px; color: #444; }
.newtab { position: relative; margin-left: 10px; }
.newtab svg { width: 34px; height: 18px; }
.wincontrols { position: relative; display: flex; gap: 6px; padding-right: 3px; align-items: flex-start; }
.glass { width: 26px; height: 18px; background: linear-gradient(#8fa5c6, #4d6a9a 45%, #1b3a70 50%, #34578f); border: 1px solid #b5c5dc; border-top: 0; }
.glass svg { width: 12px; height: 12px; fill: #fff; }
.profile { border-radius: 0 0 5px 5px; }
.trio { display: flex; border-radius: 0 0 5px 5px; overflow: hidden; }
.trio .glass:first-child { width: 29px; }
.trio .close { width: 48px; background: linear-gradient(#d9988f, #c55a4a 45%, #a92a18 50%, #c9523a); }
.trio .close svg { width: 11px; }

/* Toolbar */
.toolbar { display: flex; align-items: center; height: 36px; padding: 0 10px 0 10px; background: #f2f2f2; }
.toolbar > button { width: 16px; margin-right: 12px; }
.toolbar > button svg { width: 16px; height: 16px; }
.ln { fill: none; stroke: #5a5a5a; stroke-width: 2; }
.off .ln { stroke: #ccc; }
.omnibox { flex: 1; min-width: 0; display: flex; align-items: center; height: 29px; margin-right: 10px; padding: 0 6px 0 8px; background: #fff; border: 1px solid #aaa; border-radius: 3px; font-size: 14px; }
.lock { width: 10px; height: 14px; }
.secure { color: #0b8043; padding: 0 8px 0 8px; border-right: 1px solid #bbb; line-height: 16px; font-size: 13px; }
.url { flex: 1; min-width: 0; margin: 0 6px 0 8px; overflow: hidden; white-space: nowrap; color: #808080; font-size: 13px; }
.https { color: #0b8043; }
.host { color: #111; }
.omnibox button svg { width: 16px; height: 16px; }
.exts { display: flex; gap: 16px; }
.exts svg { width: 16px; height: 16px; }
.bookmarks { display: flex; align-items: center; gap: 12px; height: 26px; padding: 0 0 6px 11px; background: #f2f2f2; border-bottom: 1px solid #999; }
.bookmarks a { display: flex; align-items: center; gap: 5px; }
.bookmarks svg { width: 14px; height: 14px; }

/* Norton toolbar */
.norton { display: flex; align-items: center; height: 30px; background: linear-gradient(#e4e4e4, #f5f5f5 40%, #f8f8f8); border-top: 1px solid #777; border-bottom: 1px solid #666; }
.nx { width: 16px; margin-right: 11px; }
.nx svg { width: 12px; height: 12px; }
.nlogo { display: flex; align-items: center; width: 62px; gap: 2px; margin: 0 8px 0 7px; }
.nlogo svg { width: 20px; height: 22px; }
.nlogo b { display: block; font: bold 11px/14px "Open Sans", sans-serif; }
.nlogo small { display: block; font-size: 7px; line-height: 10px; color: #999; white-space: nowrap; }
.nsearch { display: flex; align-items: center; width: 343px; height: 25px; border: 1px solid #4b3a20; background: #fff; margin: 0; }
.nsearch svg { width: 14px; height: 14px; margin-left: 6px; }
.nsearch input { flex: 1; min-width: 0; height: 23px; outline: 0; }
.nsearch button { width: 80px; height: 23px; background: linear-gradient(#f9a31a, #ef8200); color: #fff; font-size: 13px; }
.nitem { display: flex; align-items: center; height: 28px; border-right: 1px solid #aaa; font-size: 9px; line-height: 13px; color: #888; white-space: nowrap; }
.nitem svg { width: 20px; height: 20px; }
.nitem em { display: block; font-style: normal; color: #333; }
.page { width: 99px; padding-left: 4px; gap: 6px; }
.guarantee { width: 100px; padding: 3px 1px 3px 3px; }
.guarantee svg { width: 20px; height: 22px; background: #ddd; }
.guarantee span { flex: 1; height: 22px; background: #c6c6c4; text-align: center; font: 10px/11px "Open Sans", sans-serif; color: #666; }
.guarantee b { display: block; }
.vault { width: 90px; padding-left: 1px; gap: 10px; }
.share { width: 89px; padding-left: 3px; gap: 5px; }
.more { gap: 4px; margin-left: 8px; }
.more i { width: 8px; height: 8px; border-radius: 50%; background: #bcc6cc; }

/* Page */
main { flex: 1; display: flex; flex-direction: column; align-items: center; padding-top: 54px; }
.rdp { width: 50%; min-width: 760px; font-family: "Liberation Sans", Arial, sans-serif; font-size: 13px; color: #111; }
.rdp-title { display: flex; align-items: center; height: 27px; gap: 2px; padding: 0 2px 1px 4px; background: linear-gradient(#8ea9cc, #b8cfea); border-top: 1px solid #223a5a; }
.rdp-title > svg { width: 20px; height: 20px; }
.rdp-title h1 { flex: 1; margin: 0 0 0 7px; font: 14px/20px "Open Sans", sans-serif; color: #1c1c3a; white-space: nowrap; }
.rdp-title button { width: 39px; height: 21px; background: linear-gradient(#c8d8ea, #a3bcd8 48%, #8faccc 52%, #b4cbe4); border: 1px solid #5d7290; box-shadow: inset 0 0 0 1px #d5e2f0; border-radius: 2px; }
.rdp-title button svg { width: 16px; height: 14px; }
.rdp-title .close { background: linear-gradient(#dc9a90, #cc5a48 48%, #b02c18 52%, #cc5a40); box-shadow: inset 0 0 0 1px #e6a59a; border-color: #6a2a30; }
.rdp-view { display: flex; height: 503px; background: #f0eff1; overflow: hidden; }
.back-left { position: relative; width: 31px; overflow: hidden; }
.back-left svg { width: 31px; height: 503px; }
.status { position: absolute; left: 3px; bottom: -7px; font-weight: bold; font-size: 12px; }
.dialog { position: relative; flex: 1; min-width: 0; padding: 8px 16px 0; background: #f0eff1; border-left: 2px solid #000; border-right: 2px solid #111; box-shadow: inset -2px 0 #9ccce0, inset 2px 0 #d5dfea; }
fieldset { margin: 0; min-width: 0; padding: 4px 9px 5px 10px; border: 1px solid #9c9c9e; box-shadow: 1px 1px #fff, inset 1px 1px #fff; }
legend { padding: 0 2px; line-height: 18px; background: #f0eff1; margin-left: -2px; }
.dict { padding: 3px 10px 11px 11px; }
.dict table { width: 100%; height: 122px; border-collapse: collapse; table-layout: fixed; background: #fff; border: 1px solid #ddd; border-top: 2px solid #777; border-left: 2px solid #777; }
.c1 { width: 376px; }
.c2 { width: 125px; }
.dict th { height: 23px; padding: 0 8px; text-align: left; font-weight: normal; line-height: 20px; background: #f0eff1; border-right: 2px solid #777; border-bottom: 2px solid #888; }
.dict th:last-child { border-right-color: #ddd; }
.dict td { height: 22px; padding: 0; border-right: 1px solid #e9e9e9; border-bottom: 1px solid #e9e9e9; }
.dict .part td { height: 10px; }
.cols { display: grid; grid-template-columns: 343fr 349fr; gap: 11px; margin-top: 7px; }
.stack input { display: block; width: 100%; height: 26px; border: 1px solid; border-color: #9c9c9e #fff #fff #9c9c9e; outline: 0; }
.stack fieldset { margin-bottom: 1px; }
.stack .current { margin: 31px 0 0; }
.options { display: flex; padding: 8px 8px 6px; }
.options legend { margin-left: 0; }
.checks { display: flex; flex-direction: column; justify-content: space-between; height: 161px; }
.checks label { display: flex; align-items: center; gap: 7px; line-height: 18px; white-space: nowrap; }
.checks input { appearance: none; flex: none; display: grid; place-items: center; width: 16px; height: 16px; background: #fff; border: 2px solid; border-color: #808080 #fff #fff #808080; }
.checks input:checked::before { content: "✔"; font: 13px/12px "DejaVu Sans", sans-serif; color: #000; }
.log { margin-top: 11px; padding: 12px 10px 0 10px; border: 1px solid #9c9c9e; border-bottom: 0; box-shadow: inset 1px 1px #fff, 1px 0 #fff; }
.log textarea { display: block; width: 100%; height: 116px; padding: 3px; border: 1px solid #777; border-right-color: #ddd; background: #fff; resize: none; overflow: hidden; outline: 0; font: 17px/17px "Liberation Mono", monospace; color: #000; }
.cursor { position: absolute; left: 85%; top: 117px; width: 16px; height: 25px; }
.back-right { display: flex; flex-direction: column; width: 10px; overflow: hidden; background: #fff; }
.back-right svg { width: 10px; height: 126px; }
.fives { display: flex; flex-direction: column; justify-content: space-between; height: 299px; line-height: 20px; font-family: "Open Sans", sans-serif; }
.below { flex: 1; background: #f0eff1; border-top: 2px solid #222; }
.vscroll { display: flex; flex-direction: column; width: 20px; background: #f0eff1; }
.vscroll button { height: 20px; }
.vscroll svg { width: 10px; height: 6px; }
.vscroll button:first-child { margin-bottom: 32px; }
.vthumb { display: flex; flex-direction: column; align-items: center; justify-content: center; gap: 2px; height: 381px; margin: 0 1px auto; background: linear-gradient(90deg, #f2f2f4, #d0cfd3 70%, #bfbec3); border: 1px solid #929296; }
.vthumb i { width: 9px; height: 2px; background: #666; }
.hscroll { display: flex; align-items: center; height: 20px; background: #f0eff1; }
.hscroll button { width: 20px; height: 20px; }
.hscroll svg { width: 6px; height: 10px; }
.hscroll button:first-child { margin-right: 4px; }
.hthumb { display: flex; flex: 1; align-items: center; justify-content: center; gap: 2px; height: 18px; margin-right: 22px; background: linear-gradient(#f4f4f6, #d6d5d9 60%, #bfbec3); border: 1px solid #929296; border-radius: 1px; }
.hthumb i { width: 2px; height: 9px; background: #777; }
.corner { width: 22px; }
.rbar { display: flex; align-items: stretch; height: 50px; background: linear-gradient(90deg, #7489a6, #8298b8 8%, #a9c0e0 14%, #a9c0e0 60%, #8195b2 72%, #7e92b0); border-top: 1px solid #3c4c62; font-family: "Open Sans", sans-serif; }
.rbar button { width: 74px; margin-right: 4px; }
.rbar button svg { width: 40px; height: 38px; }
.rbar .start { width: 67px; margin-right: 7px; }
.rbar .start svg { width: 46px; height: 46px; }
.rbar .wmp svg { width: 36px; height: 32px; }
.rbar .on { background: linear-gradient(135deg, #d5e1f0, #a9bedb 50%, #bccde4); border: 1px solid #4a5c78; box-shadow: inset 0 0 0 1px #e5edf7; border-radius: 3px; }
.rbar .lit { background: linear-gradient(135deg, #f4f7fb, #d5e0ee 50%, #e9eff7); }
.rtray { display: flex; flex: 1; align-items: center; justify-content: flex-end; gap: 10px; padding-right: 11px; color: #fff; }
.rtray svg { width: 20px; height: 20px; }
.rtray .up { width: 10px; height: 6px; margin-right: 5px; }
.rtray time { width: 68px; margin-left: 9px; font-size: 14px; line-height: 21px; text-align: center; }
.rbar .peek { width: 18px; margin: 0; background: linear-gradient(#8d9db5, #4f6380 50%, #7a8ca8); border: 1px solid #43556f; box-shadow: inset 1px 0 #a9b8cc; }
.version { margin: 44px 0 24px; font: 11px/16px "Liberation Sans", Arial, sans-serif; color: #666; }

/* Host taskbar */
.taskbar { position: relative; display: flex; height: 40px; background: linear-gradient(90deg, #16407e, #1a4f9c 20%, #17488f 30%, #1c50a0 45%, #0f3f88); border-top: 1px solid #14284a; overflow: hidden; }
.taskbar::after { content: ""; position: absolute; inset: 0 0 auto; height: 1px; background: #8ba5cc; }
.apps, .tray { position: relative; display: flex; }
.apps { gap: 4px; flex: 1; }
.apps button { width: 58px; }
.apps .start { width: 54px; margin-right: 2px; }
.apps svg { width: 32px; height: 30px; }
.apps .start svg { width: 38px; height: 38px; }
.apps .sm { width: 27px; height: 26px; }
.apps .of { width: 30px; height: 30px; }
.apps .on { background: linear-gradient(135deg, #a9bddc, #4e74b0 50%, #3d68aa); border: 1px solid #0f2a58; box-shadow: inset 0 0 0 1px #9db4d6; border-radius: 3px; }
.apps .lit { background: linear-gradient(135deg, #d5deed, #8ea6cf 50%, #b0c1de); box-shadow: inset 0 0 0 1px #e0e8f4; }
.ol { font: bold 14px "Open Sans", sans-serif; fill: #fff; }
.ol.w { font-size: 12px; }
.tray { align-items: center; gap: 8px; color: #fff; }
.tray svg { width: 16px; height: 16px; }
.tray .up { width: 10px; height: 6px; margin-right: 2px; }
.tray time { width: 64px; margin: 0 5px 0 3px; font-size: 12px; line-height: 17px; text-align: center; }
.peek { position: relative; width: 14px; background: linear-gradient(#7f99c0, #35568c 50%, #294a82); border: 1px solid #8ba5cc; }
```
